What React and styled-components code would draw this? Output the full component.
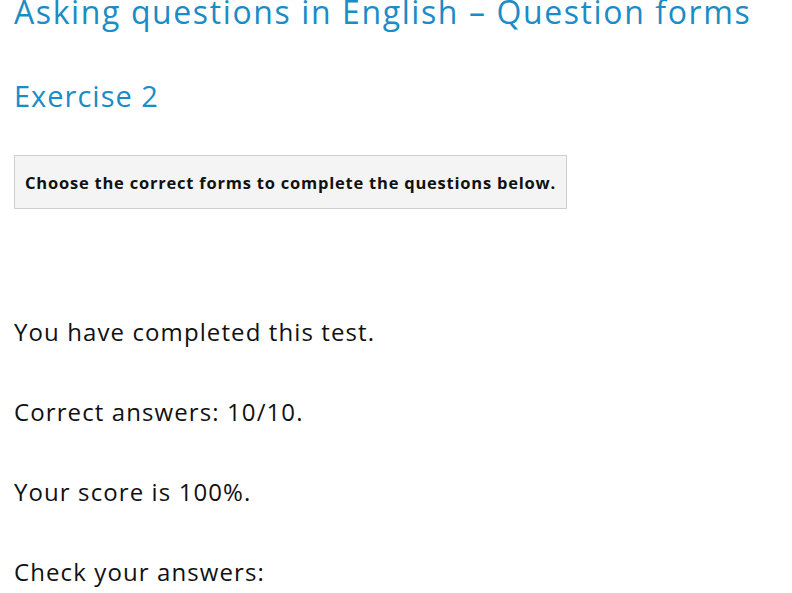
import React from "react";
import styled, { createGlobalStyle } from "styled-components";

const Global = createGlobalStyle`
  html, body { margin: 0; padding: 0; background: #fff; }
  body { font-family: "Open Sans", "Lato", sans-serif; color: #111; }
`;

const Page = styled.main`
  padding: 0 14px;
  display: flex;
  flex-direction: column;
  align-items: flex-start;
`;

const Title = styled.h1`
  margin: -8px 0 0;
  font-size: 32px;
  line-height: 40px;
  font-weight: 400;
  letter-spacing: 1.6px;
  color: #1a8cc6;
  white-space: nowrap;
`;

const Subtitle = styled.h2`
  margin: 44px 0 0;
  font-size: 29px;
  line-height: 40px;
  font-weight: 400;
  letter-spacing: 1px;
  color: #1a8cc6;
`;

const Instruction = styled.div`
  margin-top: 39px;
  width: 553px;
  box-sizing: border-box;
  height: 54px;
  display: flex;
  align-items: center;
  padding: 0 10px;
  background: #f4f4f4;
  border: 1px solid #cfcfcf;
  font-size: 16.5px;
  font-weight: 700;
  letter-spacing: 0.78px;
  color: #111;
`;

const Results = styled.section`
  margin-top: 103px;
  display: flex;
  flex-direction: column;
  gap: 40px;
`;

const Line = styled.p`
  margin: 0;
  font-size: 24px;
  line-height: 40px;
  letter-spacing: 1.1px;
  color: #111;
`;

export default function App() {
  return (
    <>
      <Global />
      <Page>
        <Title>Asking questions in English – Question forms</Title>
        <Subtitle>Exercise 2</Subtitle>
        <Instruction>Choose the correct forms to complete the questions below.</Instruction>
        <Results>
          <Line>You have completed this test.</Line>
          <Line>Correct answers: 10/10.</Line>
          <Line>Your score is 100%.</Line>
          <Line>Check your answers:</Line>
        </Results>
      </Page>
    </>
  );
}
